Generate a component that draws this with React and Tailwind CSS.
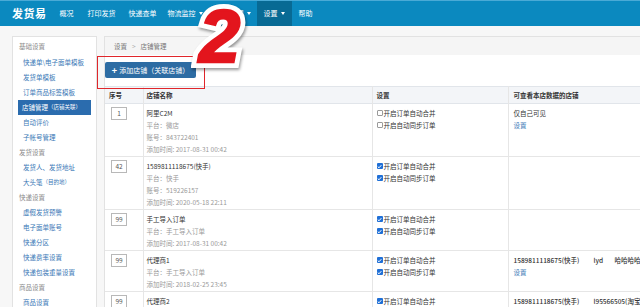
import React from "react";

function Caret() {
  return (
    <span className="inline-block w-0 h-0 border-l-[2.5px] border-r-[2.5px] border-t-[3px] border-l-transparent border-r-transparent border-t-white ml-[3px]" />
  );
}

function Header() {
  return (
    <div className="h-[26px] bg-[#0b89bf] border-t border-[#4aaad6] flex items-stretch text-white text-[7px]">
      <div className="ml-[12px] self-center text-[11px] font-bold leading-none tracking-[0.5px]">发货易</div>
      <div className="ml-[13px] flex items-center">概况</div>
      <div className="ml-[14px] flex items-center">打印发货</div>
      <div className="ml-[13px] flex items-center">快递查单</div>
      <div className="ml-[11px] flex items-center">物流监控<Caret /></div>
      <div className="ml-[13px] flex items-center">库存管理<Caret /></div>
      <div className="ml-[6px] px-[7px] flex items-center bg-[#086a94]">设置<Caret /></div>
      <div className="ml-[7px] flex items-center">帮助</div>
    </div>
  );
}

function SideHead({ children, first }) {
  return (
    <div className={(first ? "h-[17px] " : "h-[15px] ") + "flex items-center pl-[6px] text-[#8a8a8a]"}>{children}</div>
  );
}
function SideLink({ children }) {
  return <div className="h-[15px] flex items-center pl-[10px] text-[#3a78b6]">{children}</div>;
}

function Sidebar() {
  return (
    <div className="ml-[12px] w-[85px] h-[280px] shrink-0 bg-white border border-[#e2e2e2] pt-[1px] text-[6.5px] leading-none">
      <SideHead first>基础设置</SideHead>
      <SideLink>快递单\电子面单模板</SideLink>
      <SideLink>发货单模板</SideLink>
      <SideLink>订单商品标签模板</SideLink>
      <div className="h-[15px] mx-[5px] pl-[4px] flex items-center bg-[#2b6cae] text-white">
        店铺管理<span className="text-[5.5px]">（店铺关联）</span>
      </div>
      <SideLink>自动评价</SideLink>
      <SideLink>子帐号管理</SideLink>
      <SideHead>发货设置</SideHead>
      <SideLink>发货人、发货地址</SideLink>
      <SideLink>
        大头笔<span className="text-[5.5px]">（目的地）</span>
      </SideLink>
      <SideHead>快递设置</SideHead>
      <SideLink>虚假发货预警</SideLink>
      <SideLink>电子面单账号</SideLink>
      <SideLink>快递分区</SideLink>
      <SideLink>快递费率设置</SideLink>
      <SideLink>快递包装重量设置</SideLink>
      <SideHead>商品设置</SideHead>
      <SideLink>商品设置</SideLink>
    </div>
  );
}

function Check({ on }) {
  if (on) {
    return (
      <span className="w-[6px] h-[6px] rounded-[1px] bg-[#1f6fd6] flex items-center justify-center shrink-0">
        <svg width="5" height="5" viewBox="0 0 10 10">
          <path d="M1.5 5.2 L4 7.6 L8.6 2.4" fill="none" stroke="white" strokeWidth="2" />
        </svg>
      </span>
    );
  }
  return <span className="w-[6px] h-[6px] rounded-[1px] border border-[#9a9a9a] bg-white shrink-0" />;
}

function Settings({ on }) {
  return (
    <div>
      <div className="flex items-center gap-[1px] h-[12px]"><Check on={on} />开启订单自动合并</div>
      <div className="flex items-center gap-[1px] h-[12px]"><Check on={on} />开启自动同步订单</div>
    </div>
  );
}

const rows = [
  {
    no: "1",
    name: "阿里C2M",
    sub: ["平台：微店", "账号：843722401", "添加时间: 2017-08-31 00:42"],
    on: false,
    view: (
      <div>
        <div className="text-[#333]">仅自己可见</div>
        <div className="text-[#3a78b6]">设置</div>
      </div>
    ),
  },
  {
    no: "42",
    name: "1589811118675(快手)",
    sub: ["平台：快手", "账号：519226157", "添加时间: 2020-05-18 22:11"],
    on: true,
    view: null,
  },
  {
    no: "99",
    name: "手工导入订单",
    sub: ["平台：手工导入订单", "添加时间: 2017-08-31 00:42"],
    on: true,
    view: null,
  },
  {
    no: "99",
    name: "代理商1",
    sub: ["平台：手工导入订单", "添加时间: 2018-02-25 23:45"],
    on: true,
    view: (
      <div>
        <div className="flex whitespace-nowrap text-[#333] font-medium">
          <span className="w-[80px] shrink-0">1589811118675(快手)</span>
          <span className="w-[21px] shrink-0">lyd</span>
          <span>哈哈哈哈</span>
        </div>
        <div className="text-[#3a78b6]">设置</div>
      </div>
    ),
  },
  {
    no: "99",
    name: "代理商2",
    sub: ["平台：手工导入订单", "添加时间: 2018-02-25 23:45"],
    on: true,
    view: (
      <div className="flex whitespace-nowrap text-[#333] font-medium">
        <span className="w-[80px] shrink-0">1589811118675(快手)</span>
        <span>l95566505(淘宝)</span>
      </div>
    ),
  },
];

function Content() {
  return (
    <div className="ml-[7px] flex-1 h-[290px] bg-white border-l border-t border-[#e2e2e2] text-[6.5px] leading-none">
      <div className="h-[18px] bg-[#f5f5f5] flex items-center pl-[9px] text-[#777]">
        设置<span className="mx-[5px] text-[#aaa]">&gt;</span>店铺管理
      </div>
      <div className="mt-[7px] h-[16px] w-[91px] rounded-[2px] bg-[#2d6ca3] text-white text-[7px] flex items-center justify-center gap-[2px]">
        <span className="text-[9px] font-bold leading-none">+</span>添加店铺（关联店铺）
      </div>
      <table className="mt-[8px] w-full border-collapse table-fixed">
        <colgroup>
          <col className="w-[38px]" />
          <col className="w-[229px]" />
          <col className="w-[136px]" />
          <col />
        </colgroup>
        <thead>
          <tr className="h-[17px] bg-[#f3f5f8] border-y border-[#e1e5ea] text-left text-[#333]">
            <th className="pl-[4px] font-bold border-r border-[#e6e6e6]">序号</th>
            <th className="pl-[3px] font-bold border-r border-[#e6e6e6]">店铺名称</th>
            <th className="pl-[4px] font-bold border-r border-[#e6e6e6]">设置</th>
            <th className="pl-[5px] font-bold">可查看本店数据的店铺</th>
          </tr>
        </thead>
        <tbody className="leading-[12px]">
          {rows.map((r, i) => (
            <tr key={i} className="border-b border-[#e6e6e6] align-top">
              <td className="pt-[3px] pb-[1px] pl-[6px] border-r border-[#e6e6e6]">
                <div className="w-[16px] h-[13px] border border-[#b8b8b8] flex items-center justify-center text-[#555] leading-none">{r.no}</div>
              </td>
              <td className="pt-[3px] pb-[1px] pl-[3px] border-r border-[#e6e6e6]">
                <div className="text-[#333]">{r.name}</div>
                {r.sub.map((s, j) => (
                  <div key={j} className="text-[#9a9a9a]">{s}</div>
                ))}
              </td>
              <td className="pt-[3px] pb-[1px] pl-[4px] border-r border-[#e6e6e6] text-[#333]">
                <Settings on={r.on} />
              </td>
              <td className="pt-[3px] pb-[1px] pl-[5px]">{r.view}</td>
            </tr>
          ))}
        </tbody>
      </table>
    </div>
  );
}

export default function App() {
  return (
    <div className="relative w-[640px] h-[307px] overflow-hidden bg-[#f7f7f7] font-['Noto_Sans_CJK_SC',sans-serif] text-[#333]">
      <Header />
      <div className="flex items-start pt-[10px]">
        <Sidebar />
        <Content />
      </div>
      <div className="absolute left-[97px] top-[56px] w-[108px] h-[33px] border-[1.5px] border-[#e0262b]" />
      <div aria-hidden="true" className="absolute left-[199px] top-[0px] text-[74px] leading-none font-bold italic font-['Liberation_Sans',sans-serif] text-white [-webkit-text-stroke:12px_white] drop-shadow-[1px_2px_1.5px_rgba(0,0,0,0.4)]">
        2
      </div>
      <div className="absolute left-[199px] top-[0px] text-[74px] leading-none font-bold italic font-['Liberation_Sans',sans-serif] text-[#e3151d] [-webkit-text-stroke:2.5px_#e3151d]">
        2
      </div>
    </div>
  );
}
